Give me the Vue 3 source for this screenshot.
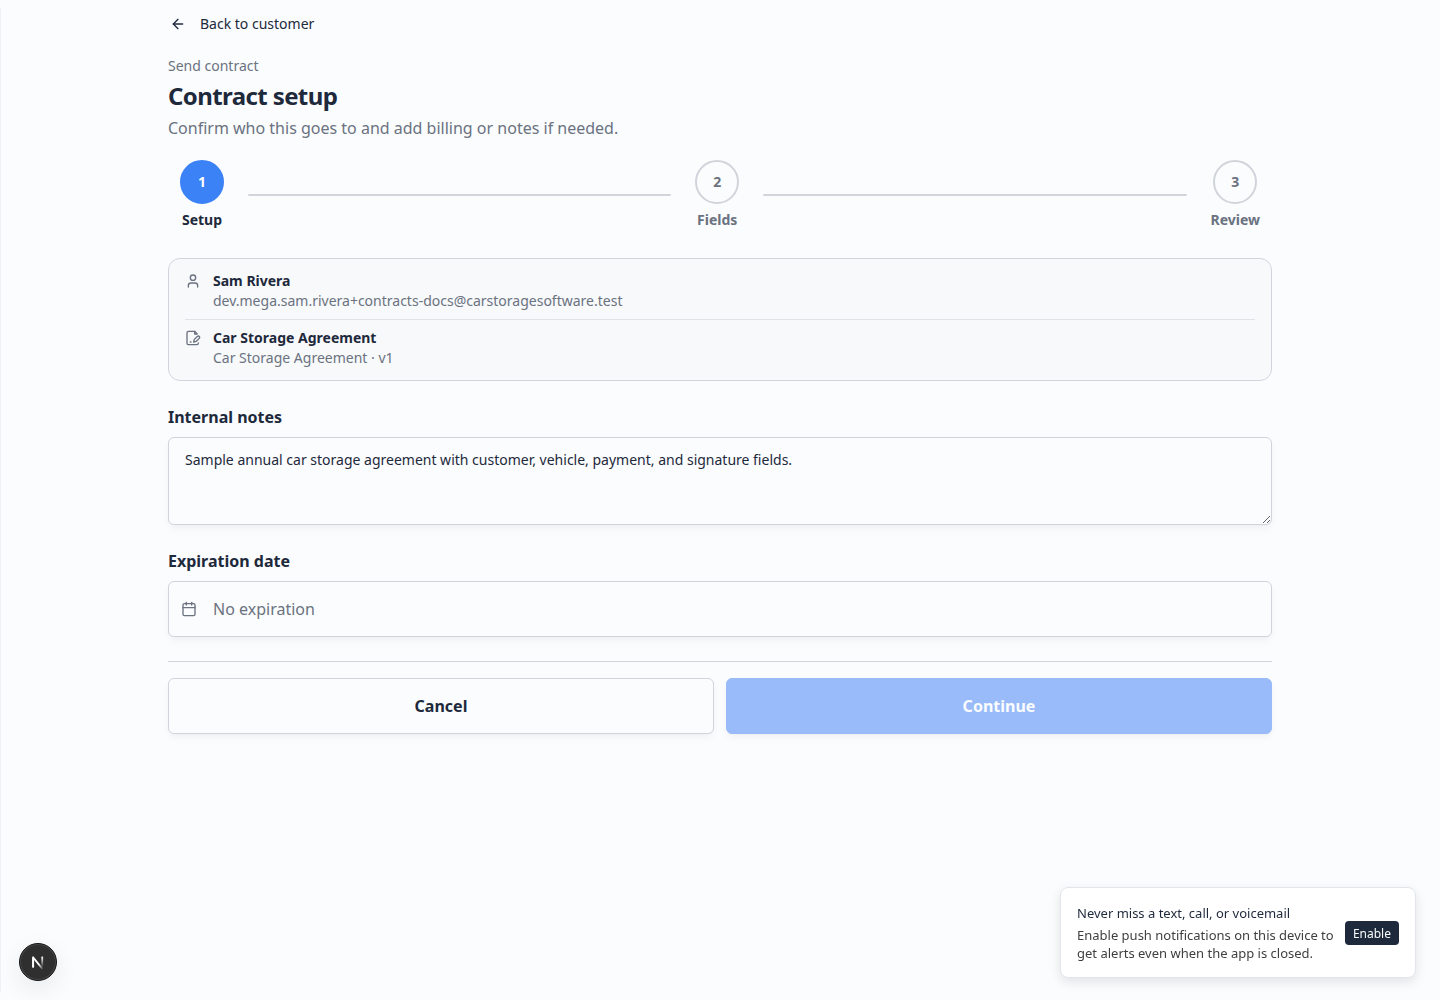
<script setup>
import { ref } from 'vue'

const steps = [
  { number: 1, label: 'Setup', active: true },
  { number: 2, label: 'Fields', active: false },
  { number: 3, label: 'Review', active: false },
]

const notes = ref('Sample annual car storage agreement with customer, vehicle, payment, and signature fields.')
</script>

<template>
  <div class="app">
    <main class="page">
      <a class="back" href="#">
        <svg class="icon" viewBox="0 0 24 24"><path d="m12 19-7-7 7-7" /><path d="M19 12H5" /></svg>
        Back to customer
      </a>

      <header class="heading">
        <p class="eyebrow">Send contract</p>
        <h1>Contract setup</h1>
        <p class="subtitle">Confirm who this goes to and add billing or notes if needed.</p>
      </header>

      <nav class="stepper" aria-label="Progress">
        <template v-for="(step, index) in steps" :key="step.number">
          <span v-if="index > 0" class="connector"></span>
          <button type="button" class="step" :class="{ active: step.active }">
            <span class="circle">{{ step.number }}</span>
            <span>{{ step.label }}</span>
          </button>
        </template>
      </nav>

      <section class="summary">
        <div class="summary-row">
          <svg class="icon" viewBox="0 0 24 24"><path d="M19 21v-2a4 4 0 0 0-4-4H9a4 4 0 0 0-4 4v2" /><circle cx="12" cy="7" r="4" /></svg>
          <div>
            <p class="name">Sam Rivera</p>
            <p>dev.mega.sam.rivera+contracts-docs@carstoragesoftware.test</p>
          </div>
        </div>
        <div class="summary-row">
          <svg class="icon" viewBox="0 0 24 24"><path d="M20 19.5v.5a2 2 0 0 1-2 2H5a2 2 0 0 1-2-2V4a2 2 0 0 1 2-2h9.500L18 5.500" /><path d="M14.500 2v4H18" /><path d="M8 18h1" /><path d="M18.420 9.610a2.100 2.100 0 1 1 2.970 2.970L16.950 17 13 18l.990-3.950Z" /></svg>
          <div>
            <p class="name">Car Storage Agreement</p>
            <p>Car Storage Agreement · v1</p>
          </div>
        </div>
      </section>

      <div class="field">
        <label for="notes">Internal notes</label>
        <textarea id="notes" v-model="notes" spellcheck="false"></textarea>
      </div>

      <div class="field">
        <label for="expiration">Expiration date</label>
        <button id="expiration" type="button" class="date">
          <svg class="icon" viewBox="0 0 24 24"><path d="M8 2v4" /><path d="M16 2v4" /><rect width="18" height="18" x="3" y="4" rx="2" /><path d="M3 10h18" /></svg>
          No expiration
        </button>
      </div>

      <footer class="actions">
        <button type="button" class="action cancel">Cancel</button>
        <button type="button" class="action continue" disabled>Continue</button>
      </footer>
    </main>

    <button type="button" class="dev-badge" aria-label="Open developer tools">
      <svg viewBox="0 0 40 40">
        <defs>
          <linearGradient id="diagonal" x1="17" y1="17" x2="26" y2="28" gradientUnits="userSpaceOnUse">
            <stop offset="0.5" stop-color="#fff" /><stop offset="1" stop-color="#fff" stop-opacity="0" />
          </linearGradient>
          <linearGradient id="stem" x1="0" y1="14" x2="0" y2="26" gradientUnits="userSpaceOnUse">
            <stop stop-color="#fff" /><stop offset="1" stop-color="#fff" stop-opacity="0" />
          </linearGradient>
        </defs>
        <path d="M14.600 26V14.800L25.200 28" fill="none" stroke="url(#diagonal)" stroke-width="2" stroke-linejoin="bevel" />
        <path d="M14.600 26V14" stroke="#fff" stroke-width="2" />
        <rect x="23.700" y="14" width="2" height="12" fill="url(#stem)" />
      </svg>
    </button>

    <aside class="toast" role="status">
      <div class="toast-text">
        <p class="toast-title">Never miss a text, call, or voicemail</p>
        <p>Enable push notifications on this device to get alerts even when the app is closed.</p>
      </div>
      <button type="button" class="enable">Enable</button>
    </aside>
  </div>
</template>

<style>
body {
  background: #fafcfe;
}
</style>

<style scoped>
* {
  box-sizing: border-box;
}

.app {
  min-height: 100vh;
  padding: 8px 0;
  background: linear-gradient(#eff1f4, #eff1f4) left / 1px 100% no-repeat content-box;
  color: #1e293b;
  font: 14px/20px "Noto Sans", sans-serif;
}

p,
h1 {
  margin: 0;
}

button,
textarea {
  font-family: inherit;
  color: inherit;
}

.icon {
  width: 16px;
  height: 16px;
  flex: none;
  fill: none;
  stroke: currentColor;
  stroke-width: 2;
  stroke-linecap: round;
  stroke-linejoin: round;
}

.page {
  max-width: 1152px;
  margin: 0 auto;
  padding: 0 24px 24px;
  display: flex;
  flex-direction: column;
  gap: 24px;
}

.back {
  align-self: flex-start;
  display: flex;
  align-items: center;
  gap: 14px;
  height: 32px;
  margin-bottom: -8px;
  padding: 0 2px;
  color: inherit;
  text-decoration: none;
}

.heading {
  display: flex;
  flex-direction: column;
  gap: 4px;
  color: #6b7280;
}

.eyebrow {
  font-size: 14px;
}

h1 {
  color: #1e293b;
  font-size: 24px;
  line-height: 32px;
  font-weight: 700;
  letter-spacing: -0.025em;
}

.subtitle {
  font-size: 16px;
  line-height: 24px;
}

.stepper {
  display: flex;
  align-items: center;
  gap: 12px;
  margin: -4px 0 4px;
}

.step {
  display: flex;
  flex-direction: column;
  align-items: center;
  gap: 6px;
  padding: 0 12px;
  border: 0;
  background: none;
  color: #6b7280;
  font-size: 14px;
  line-height: 20px;
  font-weight: 700;
}

.circle {
  display: flex;
  align-items: center;
  justify-content: center;
  width: 44px;
  height: 44px;
  border: 2px solid #d1d5db;
  border-radius: 50%;
}

.active {
  color: #1e293b;
}

.active .circle {
  border-color: #3b82f6;
  background: #3b82f6;
  color: #fff;
}

.connector {
  flex: 1;
  height: 2px;
  border-radius: 1px;
  background: #d1d5db;
}

.summary {
  padding: 12px 16px;
  border: 1px solid #d1d5db;
  border-radius: 12px;
  background: #f7f9fb;
  color: #6b7280;
}

.summary-row {
  display: flex;
  gap: 12px;
}

.summary-row .icon {
  margin-top: 2px;
}

.summary-row + .summary-row {
  margin-top: 8px;
  padding-top: 8px;
  border-top: 1px solid #dfe2e6;
}

.name {
  color: #1e293b;
  font-weight: 700;
}

.field {
  display: flex;
  flex-direction: column;
  gap: 8px;
}

.field label {
  font-size: 16px;
  line-height: 24px;
  font-weight: 700;
}

textarea,
.date,
.action {
  border: 1px solid #d1d5db;
  border-radius: 6px;
  background: #fafcfe;
  box-shadow: 0 4px 8px -1px rgb(0 0 0 / 5%), 0 1px 2px -1px rgb(0 0 0 / 5%);
}

textarea {
  display: block;
  height: 88px;
  padding: 12px 16px;
  font-size: 14px;
  line-height: 20px;
  resize: vertical;
}

.date {
  display: flex;
  align-items: center;
  gap: 16px;
  height: 56px;
  padding: 0 12px;
  color: #6b7280;
  font-size: 16px;
}

.actions {
  display: flex;
  gap: 12px;
  padding-top: 16px;
  border-top: 1px solid #d1d5db;
}

.action {
  flex: 1;
  height: 56px;
  font-size: 16px;
  line-height: 24px;
  font-weight: 700;
}

.continue {
  border-color: #99bbf9;
  background: #99bbf9;
  color: #fafcfe;
}

.dev-badge {
  position: fixed;
  left: 19px;
  bottom: 19px;
  width: 38px;
  height: 38px;
  padding: 0;
  border: 1px solid #171717;
  border-radius: 50%;
  background: #2f2f2f;
  box-shadow: inset 0 0 0 1px #484848, 0 8px 24px rgb(0 0 0 / 8%);
}

.dev-badge svg {
  display: block;
  width: 100%;
}

.toast {
  position: fixed;
  right: 24px;
  bottom: 22px;
  display: flex;
  align-items: center;
  gap: 6px;
  width: 356px;
  padding: 16px 16px 15px;
  border: 1px solid #e2e5e9;
  border-radius: 8px;
  background: #fff;
  box-shadow: 0 4px 12px rgb(0 0 0 / 10%);
  color: #3f3f3f;
  font-size: 13px;
  line-height: 18px;
}

.toast-text {
  flex: 1;
  display: flex;
  flex-direction: column;
  gap: 4px;
}

.toast-title {
  color: #1e293b;
}

.enable {
  height: 24px;
  padding: 0 8px;
  border: 0;
  border-radius: 4px;
  background: #1e293b;
  color: #fafcfe;
  font-size: 12px;
}
</style>
